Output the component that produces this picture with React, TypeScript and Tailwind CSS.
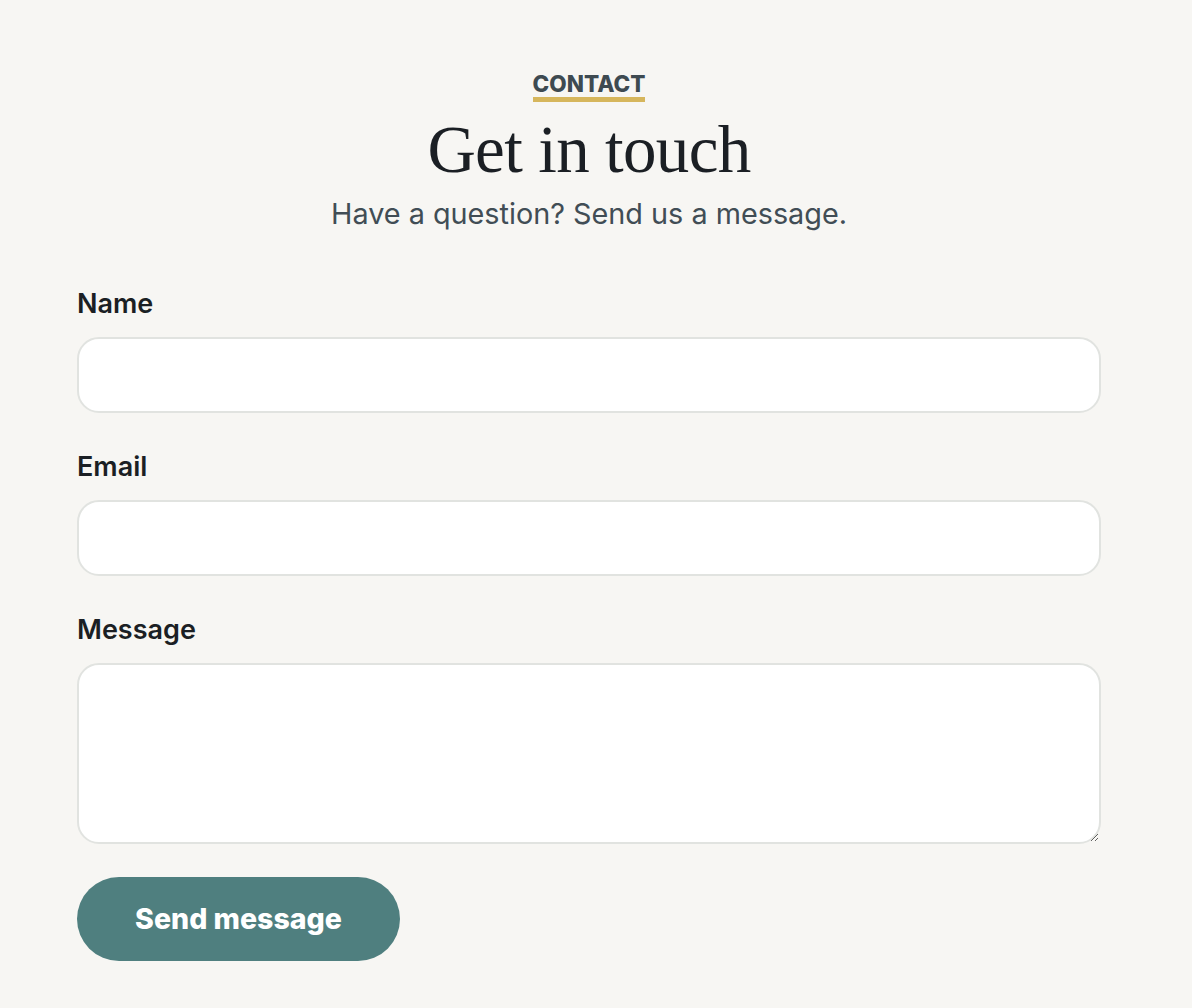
import React, { useState } from 'react';

const sans = "font-['Inter','Noto_Sans',sans-serif]";

const Field: React.FC<{ label: string; children: React.ReactNode }> = ({ label, children }) => (
  <div className="flex flex-col">
    <label className="text-[27px] leading-[36px] font-semibold text-[#1b1f24] mb-[15px]">{label}</label>
    {children}
  </div>
);

const inputCls =
  'w-full h-[76px] px-5 rounded-[22px] border-2 border-[#e1e3e0] bg-white text-[24px] text-[#1b1f24] outline-none focus:border-[#4f7f7f]';

export default function App() {
  const [form, setForm] = useState({ name: '', email: '', message: '' });

  return (
    <div className={`min-h-screen bg-[#f7f6f3] ${sans}`}>
      <section className="ml-[77px] w-[1024px] pt-[71px] pb-[47px]">
        <div className="flex flex-col items-center text-center">
          <span className="text-[22.5px] leading-[26px] font-extrabold text-[#3e4a51] border-b-[5px] border-[#d6b65c]">
            CONTACT
          </span>
          <h1 className="mt-[10px] font-['Liberation_Serif','DejaVu_Serif',serif] text-[67px] leading-[74px] tracking-[-0.01em] text-[#1b1f24]">
            Get in touch
          </h1>
          <p className="mt-[10px] text-[28.8px] leading-[36px] text-[#414d55]">Have a question? Send us a message.</p>
        </div>

        <form className="mt-[54px] flex flex-col gap-[36px]" onSubmit={e => e.preventDefault()}>
          <Field label="Name">
            <input type="text" value={form.name} onChange={e => setForm({ ...form, name: e.target.value })} className={inputCls} />
          </Field>
          <Field label="Email">
            <input type="email" value={form.email} onChange={e => setForm({ ...form, email: e.target.value })} className={inputCls} />
          </Field>
          <Field label="Message">
            <textarea
              value={form.message}
              onChange={e => setForm({ ...form, message: e.target.value })}
              className="w-full h-[181px] px-5 py-4 rounded-[22px] border-2 border-[#e1e3e0] bg-white text-[24px] text-[#1b1f24] outline-none focus:border-[#4f7f7f]"
            />
          </Field>
        </form>

        <button
          type="submit"
          className="mt-[33px] w-[323px] h-[84px] rounded-full bg-[#4f7f7f] text-white text-[28.5px] font-extrabold hover:bg-[#446f6f] transition-colors"
        >
          Send message
        </button>
      </section>
    </div>
  );
}
